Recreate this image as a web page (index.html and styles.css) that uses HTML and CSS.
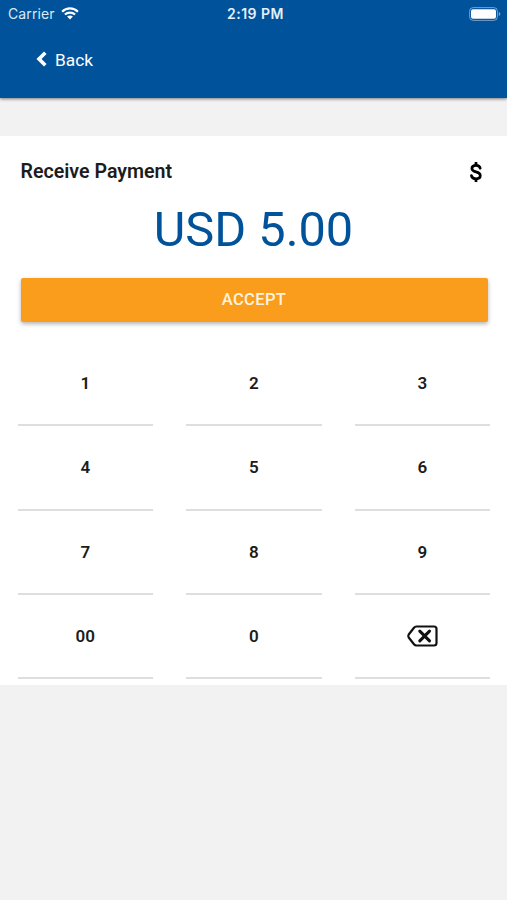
FILE: index.html
```html
<!DOCTYPE html>
<html lang="en">
<head>
<meta charset="utf-8">
<title>Receive Payment</title>
<link rel="stylesheet" href="styles.css">
</head>
<body>
<header class="header">
  <div class="status">
    <div class="carrier"><span>Carrier</span>
      <svg class="wifi" width="18" height="13" viewBox="0 0 18 13" fill="none" stroke="#fff" stroke-width="2.1"><path d="M1.1 4.7C5.5.2 12.5.2 16.900 4.700"/><path d="M3.900 7.600C6.700 4.900 11.300 4.900 14.100 7.600"/><path d="M9 12.500 6.100 9.600C7.700 8.100 10.300 8.100 11.900 9.600Z" fill="#fff" stroke="none"/></svg>
    </div>
    <div class="time">2:19 PM</div>
    <svg class="battery" width="32" height="14" viewBox="0 0 32 14"><rect x=".6" y=".6" width="27.800" height="12.800" rx="3.600" fill="none" stroke="#fff" stroke-opacity=".45" stroke-width="1"/><rect x="2" y="2.200" width="25" height="9.600" rx="2" fill="#fff"/><path d="M29.800 5v4q1.500-.6 1.500-2t-1.500-2" fill="#fff" fill-opacity=".5"/></svg>
  </div>
  <a class="back">
    <svg width="11" height="16" viewBox="0 0 11 16" fill="none" stroke="#fff" stroke-width="3.600"><path d="M9.300 1.700 3 8l6.300 6.300"/></svg>
    <span>Back</span>
  </a>
</header>
<main class="card">
  <div class="title-row">
    <h1 class="title">Receive Payment</h1>
    <svg class="dollar" width="14" height="22" viewBox="0 0 14 22" fill="none" stroke="#000" stroke-width="2.700" stroke-linecap="round"><path d="M7 .9v3M7 18.100v3" stroke-linecap="butt"/><path d="M11.200 7.300C10.800 5.300 9.300 4.300 7 4.300C4.500 4.300 2.900 5.500 2.900 7.500C2.900 9.500 4.400 10.200 7 10.900C9.800 11.600 11.300 12.600 11.300 14.500C11.300 16.600 9.500 17.800 7 17.800C4.300 17.800 2.700 16.600 2.400 14.500"/></svg>
  </div>
  <div class="amount">USD 5.00</div>
  <button class="accept">ACCEPT</button>
  <div class="keypad">
    <div class="key">1</div><div class="key">2</div><div class="key">3</div>
    <div class="key">4</div><div class="key">5</div><div class="key">6</div>
    <div class="key">7</div><div class="key">8</div><div class="key">9</div>
    <div class="key">00</div><div class="key">0</div>
    <div class="key"><svg width="32" height="22" viewBox="0 0 32 22" fill="none" stroke="#111" stroke-width="2.200" stroke-linejoin="round"><path d="M10.300 1.500H28Q30.500 1.500 30.500 4V18Q30.500 20.500 28 20.500H10.300Q9 20.500 8 19.300L2.700 12.500Q1.700 11 2.700 9.500L8 2.700Q9 1.500 10.300 1.500Z"/><path d="M13.800 6.200 23.500 15.800M23.500 6.200 13.800 15.800" stroke-width="3.100" stroke-linecap="round"/></svg></div>
  </div>
</main>
</body>
</html>
```
FILE: styles.css
```css
* { box-sizing: border-box; }
body {
  margin: 0;
  background: #f2f2f2;
  color: #1c1c1c;
  font-family: Roboto, "Liberation Sans", sans-serif;
}
.header {
  height: 98px;
  background: #00539b;
  color: #fff;
  box-shadow: 0 1px 3px rgba(0, 0, 0, .5);
}
.status {
  display: grid;
  grid-template-columns: 1fr auto 1fr;
  align-items: center;
  height: 27px;
  padding: 0 6px 0 8px;
  font-family: Inter, sans-serif;
}
.carrier {
  display: flex;
  align-items: center;
  gap: 6px;
  font-size: 14px;
  letter-spacing: .1px;
  color: #dce9f5;
}
.time {
  padding-left: 2px;
  font-size: 14px;
  font-weight: 600;
  letter-spacing: .5px;
  color: #e6f0f9;
}
.battery { justify-self: end; }
.back {
  display: flex;
  align-items: center;
  gap: 8px;
  width: max-content;
  height: 24px;
  margin: 20px 0 0 36px;
  font-size: 17.300px;
}
.back svg { margin-bottom: 1px; }
.back span { padding-top: 2px; }
.card {
  height: 549px;
  margin-top: 38px;
  padding-top: 21px;
  background: #fff;
}
.title-row {
  display: flex;
  align-items: center;
  justify-content: space-between;
  height: 29px;
  padding: 0 24px 0 20.500px;
}
.title {
  margin: 0;
  font-size: 19.600px;
  font-weight: 600;
}
.amount {
  height: 92px;
  line-height: 88px;
  font-size: 48.700px;
  color: #00539b;
  text-align: center;
}
.accept {
  display: block;
  width: 467px;
  height: 44px;
  margin: 0 0 0 20.500px;
  padding: 0 0 2px;
  border: 0;
  border-radius: 2px;
  background: #fa9d1c;
  color: #fff3df;
  font: 500 16.500px Roboto, sans-serif;
  letter-spacing: .35px;
  box-shadow: 0 2px 4px rgba(0, 0, 0, .3);
}
.keypad {
  display: grid;
  grid-template-columns: repeat(3, 135.500px);
  grid-auto-rows: 84.300px;
  column-gap: 33px;
  margin: 20px 0 0 17.500px;
}
.key {
  display: flex;
  align-items: center;
  justify-content: center;
  border-bottom: 2px solid #dedede;
  font-size: 17px;
  font-weight: 600;
}
```
